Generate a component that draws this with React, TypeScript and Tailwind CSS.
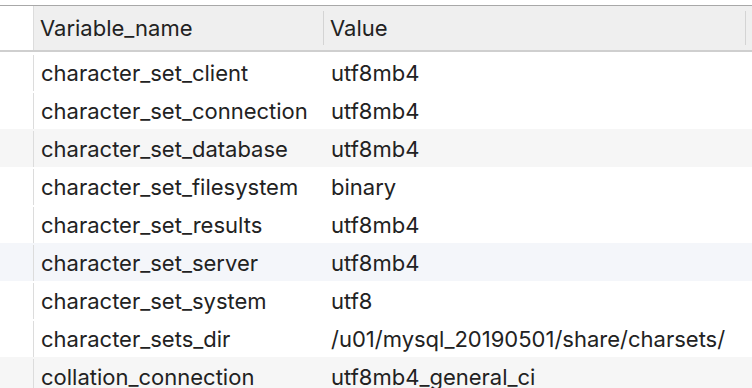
import React from "react";

const rows: { name: string; value: string; bg: string }[] = [
  { name: "character_set_client", value: "utf8mb4", bg: "bg-white" },
  { name: "character_set_connection", value: "utf8mb4", bg: "bg-white" },
  { name: "character_set_database", value: "utf8mb4", bg: "bg-[#f6f6f6]" },
  { name: "character_set_filesystem", value: "binary", bg: "bg-white" },
  { name: "character_set_results", value: "utf8mb4", bg: "bg-white" },
  { name: "character_set_server", value: "utf8mb4", bg: "bg-[#f4f6fa]" },
  { name: "character_set_system", value: "utf8", bg: "bg-white" },
  { name: "character_sets_dir", value: "/u01/mysql_20190501/share/charsets/", bg: "bg-white" },
  { name: "collation_connection", value: "utf8mb4_general_ci", bg: "bg-[#f6f6f6]" },
];

export default function App() {
  return (
    <div
      className="w-[752px] h-[388px] overflow-hidden bg-white text-[#222] text-[22px]"
      style={{ fontFamily: "Inter, 'Noto Sans', sans-serif" }}
    >
      <div className="h-[5px] bg-white" />
      <div className="h-px bg-[#a8a8a8]" />
      <div className="flex h-[46px] border-b-2 border-[#cfcfcf]">
        <div className="w-[34px] bg-white border-r border-[#dcdcdc]" />
        <div className="flex-1 flex items-center bg-[#efefef]">
          <div className="w-[289px] pl-[6px] flex items-center h-full">Variable_name</div>
          <div className="w-px h-[34px] bg-[#d4d4d4]" />
          <div className="flex-1 pl-[6px]">Value</div>
          <div className="w-px h-[34px] bg-[#d4d4d4] mr-[6px]" />
        </div>
      </div>
      <div className="h-px" />
      {rows.map((r) => (
        <div key={r.name} className={`flex h-[38px] items-center pt-[2px] ${r.bg}`}>
          <div className="w-[34px] h-full border-r border-[#dcdcdc]" />
          <div className="w-[290px] pl-[7px] whitespace-nowrap">{r.name}</div>
          <div className="flex-1 pl-[7px] whitespace-nowrap">{r.value}</div>
        </div>
      ))}
    </div>
  );
}
